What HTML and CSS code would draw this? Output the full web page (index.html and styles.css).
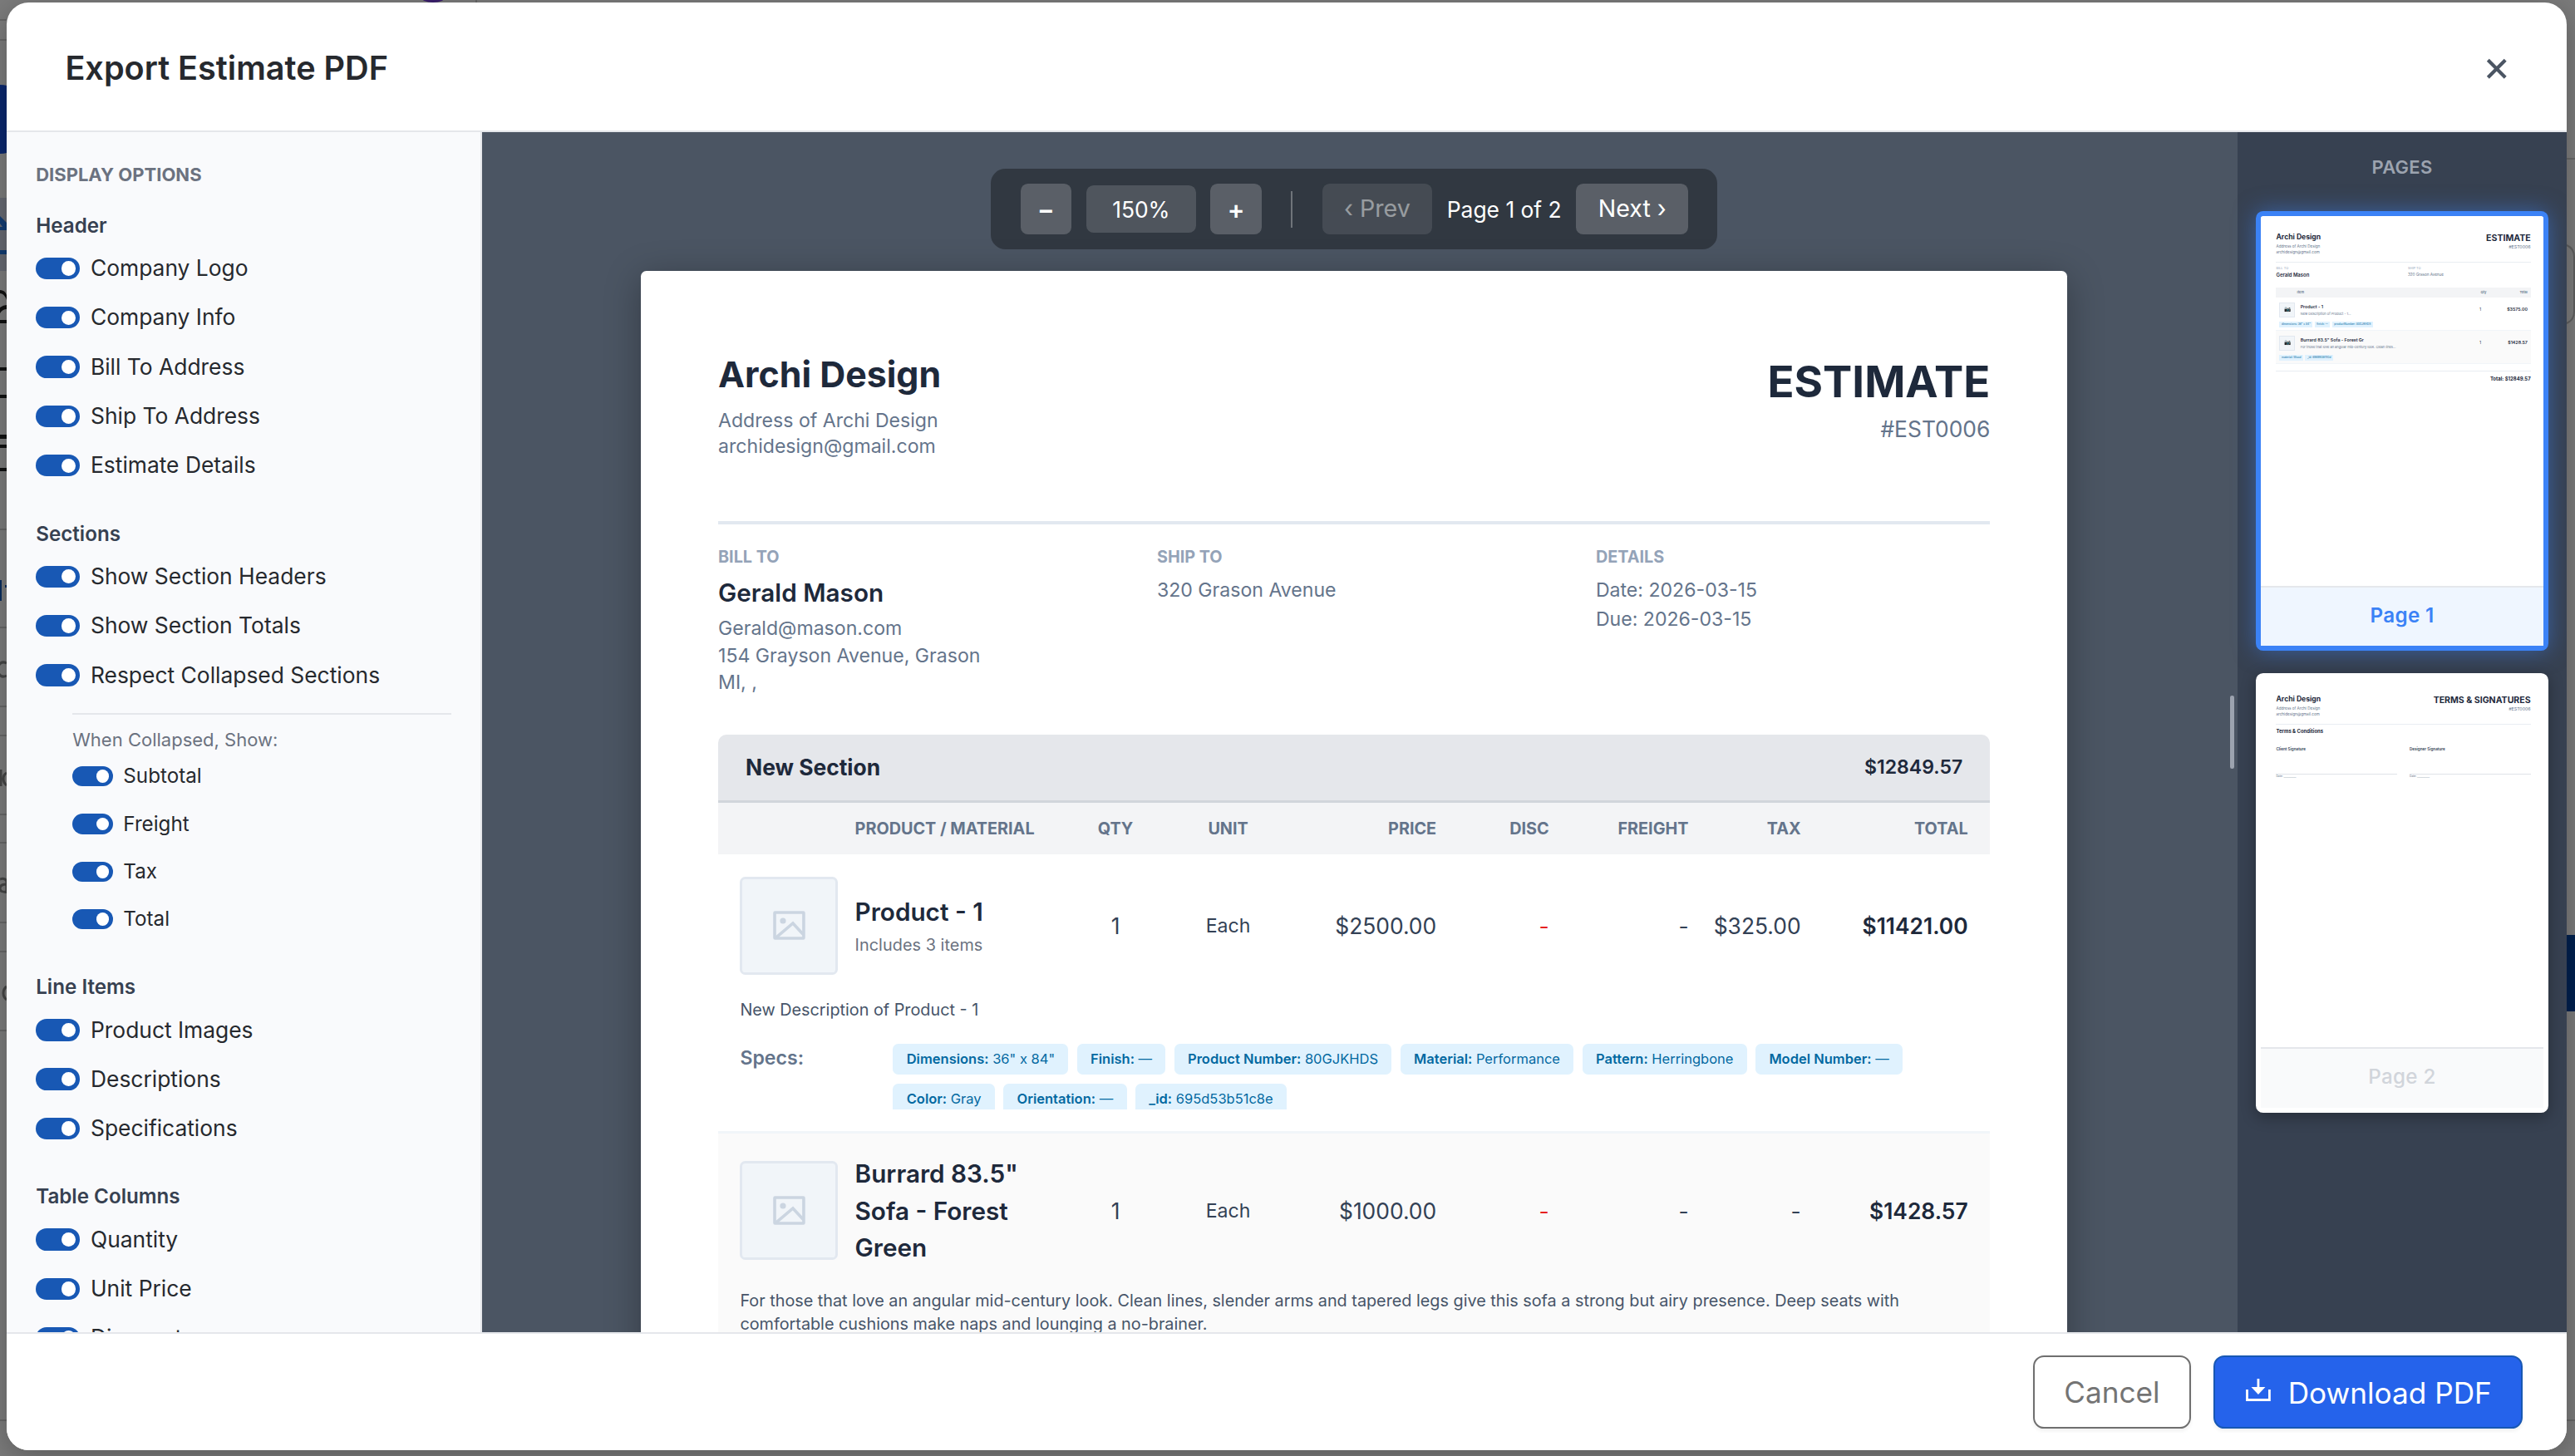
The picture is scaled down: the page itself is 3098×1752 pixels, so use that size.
FILE: index.html
```html
<!DOCTYPE html>
<html lang="en">
<head>
<meta charset="utf-8">
<title>Export Estimate PDF</title>
<link rel="stylesheet" href="styles.css">
</head>
<body>
<svg class="backdrop" viewBox="0 0 3098 1752" aria-hidden="true">
  <g fill="#666"><path d="M0 23h8v2H0zM0 47h8v2H0zM0 636h8v2H0zM0 754h8v2H0zM0 849h8v2H0zM0 884h8v2H0zM0 979h8v2H0zM0 1013h8v2H0zM0 1109h8v2H0zM0 1144h8v2H0zM0 1239h8v2H0zM0 1708h8v2H0zM572 0h2v3h-2zM3088 190h10v2h-10zM3088 1708h10v2h-10z"/></g>
  <path fill="#0a276d" d="M0 102q5 0 8 1v81q-3 1-8 1z"/>
  <path fill="#666972" d="M0 238h8v88H0z"/>
  <path fill="#123c72" d="M0 260l8 8v9H0v-4h3l-3-4zM0 301h8v5H0z"/>
  <path fill="#111" d="M0 349q6 0 8 6v6q-3-8-8-8zM0 370q4-3 8-3v5q-5 0-8 5zM0 385h8v4H0zM0 442h8v4H0zM0 475h8v4H0zM0 523h8v5H0zM0 535h8v4H0zM0 563h8v4H0z"/>
  <path fill="#0a2c5c" d="M0 698h2v25H0zM6 704h2v3H6z"/>
  <g fill="none" stroke="#454545" stroke-width="3"><path d="M8 798q-6-3-9 2M8 813q-6 3-9-2M1 926v20M8 930q-4 2-4 7t4 8M0 1058q5-2 8 2v15M8 1064q-8 0-8 5t8 4M8 1187q-4 3-4 8t4 8"/></g>
  <ellipse cx="521" cy="-4" rx="15" ry="7" fill="#3b1f6e"/>
  <path fill="none" stroke="#5e5e5e" stroke-width="2" d="M3088 295q9 4 9 14v66q0 10-9 14"/>
  <path fill="#00204e" d="M3088 1125h10v92h-10z"/>
</svg>

<main class="modal">
  <header class="modal-head">
    <h1>Export Estimate PDF</h1>
    <svg class="close" viewBox="0 0 22 22"><path d="M2 2l18 18M20 2L2 20"/></svg>
  </header>

  <div class="modal-body">
    <aside class="options">
      <h2>DISPLAY OPTIONS</h2>
      <section>
        <h3>Header</h3>
        <label class="opt"><i class="sw"></i>Company Logo</label>
        <label class="opt"><i class="sw"></i>Company Info</label>
        <label class="opt"><i class="sw"></i>Bill To Address</label>
        <label class="opt"><i class="sw"></i>Ship To Address</label>
        <label class="opt"><i class="sw"></i>Estimate Details</label>
      </section>
      <section>
        <h3>Sections</h3>
        <label class="opt"><i class="sw"></i>Show Section Headers</label>
        <label class="opt"><i class="sw"></i>Show Section Totals</label>
        <label class="opt"><i class="sw"></i>Respect Collapsed Sections</label>
        <div class="sub">
          <p>When Collapsed, Show:</p>
          <label class="opt"><i class="sw"></i>Subtotal</label>
          <label class="opt"><i class="sw"></i>Freight</label>
          <label class="opt"><i class="sw"></i>Tax</label>
          <label class="opt"><i class="sw"></i>Total</label>
        </div>
      </section>
      <section>
        <h3>Line Items</h3>
        <label class="opt"><i class="sw"></i>Product Images</label>
        <label class="opt"><i class="sw"></i>Descriptions</label>
        <label class="opt"><i class="sw"></i>Specifications</label>
      </section>
      <section>
        <h3>Table Columns</h3>
        <label class="opt"><i class="sw"></i>Quantity</label>
        <label class="opt"><i class="sw"></i>Unit Price</label>
        <label class="opt"><i class="sw"></i>Discount</label>
      </section>
    </aside>

    <div class="preview">
      <div class="toolbar">
        <span class="btn square">−</span>
        <span class="level">150%</span>
        <span class="btn square">+</span>
        <span class="sep"></span>
        <span class="btn nav off">‹ Prev</span>
        <span class="count">Page 1 of 2</span>
        <span class="btn nav">Next ›</span>
      </div>

      <article class="paper">
        <div class="doc-head">
          <div>
            <div class="company">Archi Design</div>
            <div class="addr">Address of Archi Design<br>archidesign@gmail.com</div>
          </div>
          <div class="doc-title">
            <div class="kind">ESTIMATE</div>
            <div class="num">#EST0006</div>
          </div>
        </div>

        <div class="meta">
          <div>
            <h4>BILL TO</h4>
            <div class="client">Gerald Mason</div>
            <div class="contact">Gerald@mason.com<br>154 Grayson Avenue, Grason<br>MI, ,</div>
          </div>
          <div>
            <h4>SHIP TO</h4>
            <div class="plain">320 Grason Avenue</div>
          </div>
          <div>
            <h4>DETAILS</h4>
            <div class="plain">Date: 2026-03-15<br>Due: 2026-03-15</div>
          </div>
        </div>

        <div class="sec-head"><span>New Section</span><span class="sum">$12849.57</span></div>
        <div class="cols thead">
          <span></span><span>PRODUCT / MATERIAL</span><span class="c">QTY</span><span class="c">UNIT</span><span class="r">PRICE</span><span class="r">DISC</span><span class="r">FREIGHT</span><span class="r">TAX</span><span class="r">TOTAL</span>
        </div>

        <div class="item">
          <div class="cols">
            <span class="pic"><svg viewBox="0 0 39 35"><rect x="2" y="2" width="35" height="31" rx=".5"/><circle cx="12" cy="12" r="3.6"/><path d="M4 32L24 15l13 14"/></svg></span>
            <div><div class="name">Product - 1</div><div class="inc">Includes 3 items</div></div>
            <span class="c">1</span><span class="c unit">Each</span><span class="r">$2500.00</span><span class="r red">-</span><span class="r">-</span><span class="r">$325.00</span><span class="r total">$11421.00</span>
          </div>
          <p class="desc">New Description of Product - 1</p>
          <div class="specs">
            <span class="specs-label">Specs:</span>
            <div class="chips">
              <span><b>Dimensions:</b> 36" x 84"</span><span><b>Finish:</b> —</span><span><b>Product Number:</b> 80GJKHDS</span><span><b>Material:</b> Performance</span><span><b>Pattern:</b> Herringbone</span><span><b>Model Number:</b> —</span><span><b>Color:</b> Gray</span><span><b>Orientation:</b> —</span><span><b>_id:</b> 695d53b51c8e</span>
            </div>
          </div>
        </div>

        <div class="item alt">
          <div class="cols">
            <span class="pic"><svg viewBox="0 0 39 35"><rect x="2" y="2" width="35" height="31" rx=".5"/><circle cx="12" cy="12" r="3.6"/><path d="M4 32L24 15l13 14"/></svg></span>
            <div class="name">Burrard 83.5" Sofa - Forest Green</div>
            <span class="c">1</span><span class="c unit">Each</span><span class="r">$1000.00</span><span class="r red">-</span><span class="r">-</span><span class="r">-</span><span class="r total">$1428.57</span>
          </div>
          <p class="desc">For those that love an angular mid-century look. Clean lines, slender arms and tapered legs give this sofa a strong but airy presence. Deep seats with comfortable cushions make naps and lounging a no-brainer.</p>
        </div>
      </article>
    </div>

    <div class="handle"><i></i></div>

    <aside class="pages">
      <h2>PAGES</h2>
      <div class="card active">
        <div class="mini">
          <div class="m-head">
            <div><div class="m-co">Archi Design</div><div class="m-addr">Address of Archi Design<br>archidesign@gmail.com</div></div>
            <div class="m-title"><div class="m-kind">ESTIMATE</div><div class="m-num">#EST0006</div></div>
          </div>
          <div class="m-meta">
            <div><div class="m-lab">BILL TO</div><div class="m-client">Gerald Mason</div></div>
            <div><div class="m-lab">SHIP TO</div><div class="m-ship">320 Grason Avenue</div></div>
          </div>
          <div class="m-thead"><span>Item</span><span class="c">Qty</span><span class="r">Total</span></div>
          <div class="m-item">
            <div class="m-row"><span class="m-pic">📷</span><div><div class="m-name">Product - 1</div><div class="m-desc">New Description of Product - 1...</div></div><span class="c">1</span><span class="m-sum">$3575.00</span></div>
            <div class="m-chips"><span>dimensions: 36" x 84"</span><span>finish: —</span><span>productNumber: 80GJKHDS</span></div>
          </div>
          <div class="m-item alt">
            <div class="m-row"><span class="m-pic">📷</span><div><div class="m-name">Burrard 83.5" Sofa - Forest Gr</div><div class="m-desc">For those that love an angular mid-century look. Clean lines...</div></div><span class="c">1</span><span class="m-sum">$1428.57</span></div>
            <div class="m-chips"><span>material: Wood</span><span>_id: 6969906f1f0d</span></div>
          </div>
          <div class="m-total">Total: $12849.57</div>
        </div>
        <div class="tag">Page 1</div>
      </div>
      <div class="card">
        <div class="mini">
          <div class="m-head">
            <div><div class="m-co">Archi Design</div><div class="m-addr">Address of Archi Design<br>archidesign@gmail.com</div></div>
            <div class="m-title"><div class="m-kind">TERMS &amp; SIGNATURES</div><div class="m-num">#EST0006</div></div>
          </div>
          <div class="m-terms">Terms &amp; Conditions</div>
          <div class="m-signs">
            <div><div class="m-sign">Client Signature</div><div class="m-date">Date: __________</div></div>
            <div><div class="m-sign">Designer Signature</div><div class="m-date">Date: __________</div></div>
          </div>
        </div>
        <div class="tag">Page 2</div>
      </div>
    </aside>
  </div>

  <footer class="modal-foot">
    <button class="cancel">Cancel</button>
    <button class="download"><svg viewBox="0 0 30 27"><path class="line" d="M1.5 13v12.5h27V13M15 0v12"/><path d="M6.5 10h17L15 19z"/></svg>Download PDF</button>
  </footer>
</main>
</body>
</html>
```
FILE: styles.css
```css
* { box-sizing: border-box; }

body {
  margin: 0;
  height: 1752px;
  overflow: hidden;
  background: #7b7b7b;
  font-family: Inter, sans-serif;
}

h1, h2, h3, h4, p { margin: 0; }

.backdrop {
  position: absolute;
  inset: 0;
  width: 3098px;
  height: 1752px;
}

/* Everything in the dialog is sized in units of 2.2 device pixels. */
.modal {
  zoom: 2.2;
  position: relative;
  display: grid;
  grid-template-rows: 71px 1fr 64.5px;
  width: 1400px;
  height: 791.8px;
  margin: 1.4px 0 0 3.64px;
  border-radius: 12px;
  background: #fff;
  overflow: hidden;
  box-shadow: 0 4px 16px rgba(0, 0, 0, .25);
}

.modal-head {
  display: flex;
  align-items: center;
  justify-content: space-between;
  padding: 1.6px 32.3px 0 32px;
  border-bottom: 1px solid #e5e7eb;
}
.modal-head h1 {
  font-size: 18px;
  font-weight: 600;
  line-height: 24px;
  color: #26292e;
}
.close { width: 11.6px; height: 11.6px; margin-top: .6px; fill: none; stroke: #4b5563; stroke-width: 3.6; }

.modal-body {
  display: grid;
  grid-template-columns: 260px 1fr 6px 180px;
  min-height: 0;
  overflow: hidden;
  background: #4b5563;
}

/* Display options */
.options {
  padding: 16.3px 16px 0 16px;
  background: #f9fafc;
  border-right: 1px solid #e5e7eb;
  overflow: hidden;
}
.options h2 {
  font-size: 10px;
  font-weight: 700;
  line-height: 14.4px;
  color: #6b7280;
  margin-bottom: 12.3px;
}
.options section { margin-bottom: 15.8px; }
.options h3 {
  font-size: 11px;
  font-weight: 600;
  line-height: 16.5px;
  color: #374151;
  margin-bottom: 1.4px;
}
.opt {
  display: flex;
  align-items: center;
  gap: 5.9px;
  height: 26.98px;
  font-size: 12px;
  line-height: 18px;
  color: #26292e;
}
.sw {
  display: flex;
  justify-content: flex-end;
  align-items: center;
  width: 24px;
  height: 12px;
  padding-right: 2.1px;
  border-radius: 6px;
  background: #1858b4;
}
.sw::after {
  content: "";
  width: 7.9px;
  height: 7.9px;
  border-radius: 50%;
  background: #fff;
}
.sub {
  margin: 7.2px 0 16.3px 20px;
  padding-top: 6.8px;
  border-top: 1px solid #e5e7eb;
}
.sub p { font-size: 10px; line-height: 14px; color: #6b7280; }
.sub .opt { height: 26px; font-size: 11px; gap: 5.8px; }
.sub .sw { width: 22px; height: 11px; padding-right: 1.9px; }
.sub .sw::after { width: 7.2px; height: 7.2px; }

/* Preview */
.preview {
  display: flex;
  flex-direction: column;
  align-items: center;
  gap: 12px;
  padding: 20px 0 0;
  min-height: 0;
  overflow: hidden;
}
.toolbar {
  display: flex;
  flex: none;
  align-items: center;
  gap: 8px;
  height: 44px;
  padding: 0 16px;
  border-radius: 8px;
  background: rgba(0, 0, 0, .34);
  color: #fff;
  font-size: 12px;
}
.btn, .level {
  display: flex;
  align-items: center;
  justify-content: center;
  height: 28px;
  border-radius: 4px;
  background: rgba(255, 255, 255, .2);
}
.square { width: 28px; font-size: 14px; font-weight: 600; }
.level { width: 60px; height: 26px; background: rgba(255, 255, 255, .15); }
.sep { width: 1px; height: 20px; margin: 0 8px; background: rgba(255, 255, 255, .3); }
.nav { padding: 0 12px .6px; font-size: 13px; line-height: 18px; }
.off { opacity: .5; }

.paper {
  flex: none;
  width: 780px;
  height: 900px;
  padding: 42.3px 42.3px 0 42.1px;
  border-radius: 3px;
  background: #fff;
  box-shadow: 0 4px 20px rgba(0, 0, 0, .3);
}
.doc-head {
  display: flex;
  justify-content: space-between;
  height: 96.1px;
  border-bottom: 2px solid #e2e8f0;
}
.company { font-size: 19.5px; font-weight: 700; line-height: 28px; color: #1e293b; }
.addr { margin-top: 4.3px; font-size: 10.5px; line-height: 14.1px; color: #64748b; }
.doc-title { text-align: right; }
.kind { font-size: 24px; font-weight: 700; line-height: 36px; color: #1e293b; }
.num { font-size: 12px; line-height: 16.2px; color: #64748b; }

.meta {
  display: grid;
  grid-template-columns: repeat(3, 1fr);
  column-gap: 24.3px;
  height: 115.2px;
  padding-top: 11.4px;
  color: #64748b;
}
.meta h4 { font-size: 9px; font-weight: 700; line-height: 13.5px; color: #94a3b8; }
.client { margin-top: 2.6px; font-size: 13.5px; font-weight: 600; line-height: 20px; color: #1e293b; }
.contact { margin-top: 2.1px; font-size: 10.5px; line-height: 14.8px; }
.plain { margin-top: 3.4px; font-size: 10.5px; line-height: 15.7px; }

.sec-head {
  display: flex;
  align-items: center;
  justify-content: space-between;
  height: 36.9px;
  padding: 0 15px .4px;
  border-radius: 4.5px 4.5px 0 0;
  border-bottom: 1.5px solid #d1d5db;
  background: #e5e7eb;
  font-size: 12px;
  font-weight: 700;
  color: #1e293b;
}
.sum { font-size: 10.5px; font-weight: 600; }

.cols {
  display: grid;
  grid-template-columns: 62.8px 113.5px 58px 65.2px 81.3px 61.6px 76.3px 61.4px 91.4px;
  align-items: center;
  font-size: 12px;
  color: #334155;
}
.thead {
  height: 28.5px;
  padding: 0 12px .3px;
  background: #f3f4f6;
  font-size: 9px;
  font-weight: 700;
  white-space: nowrap;
  color: #64748b;
}
.c { text-align: center; }
.r { text-align: right; }
.item { padding: 12px; border-bottom: 1.5px solid #f1f5f9; }
.alt { padding-top: 11.8px; background: #fafafa; }
.pic {
  display: flex;
  align-items: center;
  justify-content: center;
  width: 53.5px;
  height: 53.9px;
  border: 1.5px solid #e2e8f0;
  border-radius: 3px;
  background: #f1f5f9;
}
.pic svg { width: 17.7px; height: 15.9px; fill: none; stroke: #cbd5e1; stroke-width: 3.6; }
.pic circle { fill: #cbd5e1; stroke: none; }
.name { font-size: 13.5px; font-weight: 600; line-height: 20.05px; color: #1e293b; }
.inc { margin-top: 2.1px; font-size: 9px; line-height: 13.5px; letter-spacing: .03px; color: #6b7280; }
.unit { font-size: 10.5px; }
.red { color: #e52020; }
.total { font-weight: 600; color: #1e293b; }
.desc { margin-top: 12.9px; font-size: 9px; line-height: 12.6px; color: #475569; }
.alt .desc { margin-top: 13.5px; }
.specs { display: flex; margin-top: 12.2px; height: 35.9px; overflow: hidden; }
.specs-label {
  width: 83.6px;
  flex: none;
  font-size: 10.5px;
  font-weight: 600;
  line-height: 16.3px;
  color: #64748b;
}
.chips { display: flex; flex-wrap: wrap; gap: 4.8px 4.65px; align-content: flex-start; }
.chips span {
  height: 17px;
  padding: 0 7.45px;
  border-radius: 3px;
  background: #e0f2fe;
  font-size: 7.5px;
  line-height: 17px;
  color: #0369a1;
}
.chips b { font-weight: 600; }

/* Divider between the preview and the page list */
.handle { display: flex; align-items: center; justify-content: center; }
.handle i { width: 2.2px; height: 40px; border-radius: 1px; background: #9ca3af; }

/* Page list */
.pages {
  padding: 11.5px 10px 0;
  background: #374151;
}
.pages h2 {
  margin-bottom: 16.5px;
  font-size: 10px;
  font-weight: 600;
  line-height: 15px;
  letter-spacing: .12px;
  text-align: center;
  color: #9ca3af;
}
.card {
  display: flex;
  flex-direction: column;
  height: 240.6px;
  margin-bottom: 12px;
  border: 3px solid #fff;
  border-radius: 4px;
  background: #fff;
  box-shadow: 0 2px 8px rgba(0, 0, 0, .3);
}
.active { border-color: #3b82f6; box-shadow: 0 0 12px rgba(59, 130, 246, .5); }
.tag {
  height: 33px;
  border-top: 1px solid #e5e7eb;
  background: #f9fafb;
  font-size: 11px;
  font-weight: 500;
  line-height: 31.2px;
  letter-spacing: .15px;
  text-align: center;
  color: #d1d5db;
}
.active .tag { background: #eff6ff; font-weight: 600; color: #3b82f6; }

.mini {
  flex: 1;
  min-height: 0;
  padding: 8.4px 7px 0 8.4px;
  border-radius: 2px 2px 0 0;
  background: #fff;
  white-space: nowrap;
}
.m-head { display: flex; justify-content: space-between; height: 17.1px; border-bottom: .5px solid #e9edf2; }
.m-co { font-size: 3.9px; font-weight: 700; line-height: 6.6px; color: #1e293b; }
.m-addr { font-size: 2.1px; line-height: 3.2px; color: #64748b; }
.m-title { text-align: right; }
.m-kind { font-size: 4.8px; font-weight: 700; line-height: 7.8px; color: #1e293b; }
.m-num { font-size: 2.4px; line-height: 2.7px; color: #64748b; }
.m-meta { display: grid; grid-template-columns: 1fr 1fr; gap: 4.9px; height: 13.8px; padding-top: 2px; }
.m-lab { font-size: 1.8px; line-height: 2.7px; color: #94a3b8; }
.m-client { margin-top: .5px; font-size: 2.7px; font-weight: 600; line-height: 4px; color: #1e293b; }
.m-ship { margin-top: .6px; font-size: 2.1px; line-height: 3.15px; color: #64748b; }
.m-thead {
  display: grid;
  grid-template-columns: 96px 12px 1fr;
  height: 5.4px;
  padding: 0 1.7px 0 11.4px;
  align-items: center;
  background: #f3f4f6;
  font-size: 1.8px;
  font-weight: 600;
  line-height: 2.7px;
  color: #64748b;
}
.m-item { height: 18.2px; padding: 2.6px 1.7px 0 1.8px; border-bottom: .4px solid #f1f5f9; }
.m-row {
  display: grid;
  grid-template-columns: 11.5px 92.4px 12px 1fr;
  align-items: center;
  height: 8.4px;
  font-size: 2.4px;
  line-height: 3.6px;
  color: #334155;
}
.m-pic {
  display: flex;
  align-items: center;
  justify-content: center;
  width: 8.5px;
  height: 8.4px;
  border: .4px solid #e2e8f0;
  background: #f1f5f9;
  font-size: 3px;
}
.m-name { font-weight: 600; color: #1e293b; }
.m-desc { margin-top: .6px; font-size: 1.8px; line-height: 2.7px; color: #64748b; }
.m-sum { text-align: right; font-weight: 600; color: #1e293b; }
.m-chips { display: flex; gap: 1px; margin-top: 2.3px; }
.m-chips span {
  padding: 0 1.2px;
  background: #e0f2fe;
  font-size: 1.5px;
  line-height: 3px;
  color: #0369a1;
}
.m-total {
  margin-top: 3.6px;
  padding-top: 2.3px;
  border-top: .5px solid #e9edf2;
  font-size: 2.7px;
  font-weight: 700;
  line-height: 4px;
  text-align: right;
  color: #1e293b;
}
.m-terms { margin-top: 2.2px; font-size: 2.7px; font-weight: 700; line-height: 4px; color: #1e293b; }
.m-signs { display: grid; grid-template-columns: 1fr 1fr; gap: 6.8px; margin-top: 6.2px; }
.m-sign { height: 15px; border-bottom: .9px solid #dfe3e8; font-size: 2.1px; font-weight: 600; line-height: 3px; color: #334155; }
.m-date { margin-top: .2px; font-size: 1.5px; line-height: 2.2px; color: #64748b; }

/* Footer */
.modal-foot {
  display: flex;
  align-items: center;
  justify-content: flex-end;
  gap: 12.2px;
  padding: 0 24.3px 0 0;
  border-top: 1px solid #e5e7eb;
  background: #fff;
}
.modal-foot button {
  display: flex;
  align-items: center;
  justify-content: center;
  height: 39.8px;
  padding: 0;
  border-radius: 6px;
  font: 400 16px/24px Inter, sans-serif;
  box-shadow: 0 1px 2px rgba(0, 0, 0, .06);
}
.modal-foot .cancel { width: 86.4px; border: 1px solid #6f6f6f; background: #fff; color: #747474; }
.modal-foot .download { width: 169px; gap: 9.4px; padding: 1.6px 0 0 1.2px; border: 1px solid #1858b4; background: #2563eb; color: #fff; }
.download svg { width: 13.6px; height: 12.3px; margin-top: -4px; fill: #fff; }
.download .line { fill: none; stroke: #fff; stroke-width: 2.8; }
```
